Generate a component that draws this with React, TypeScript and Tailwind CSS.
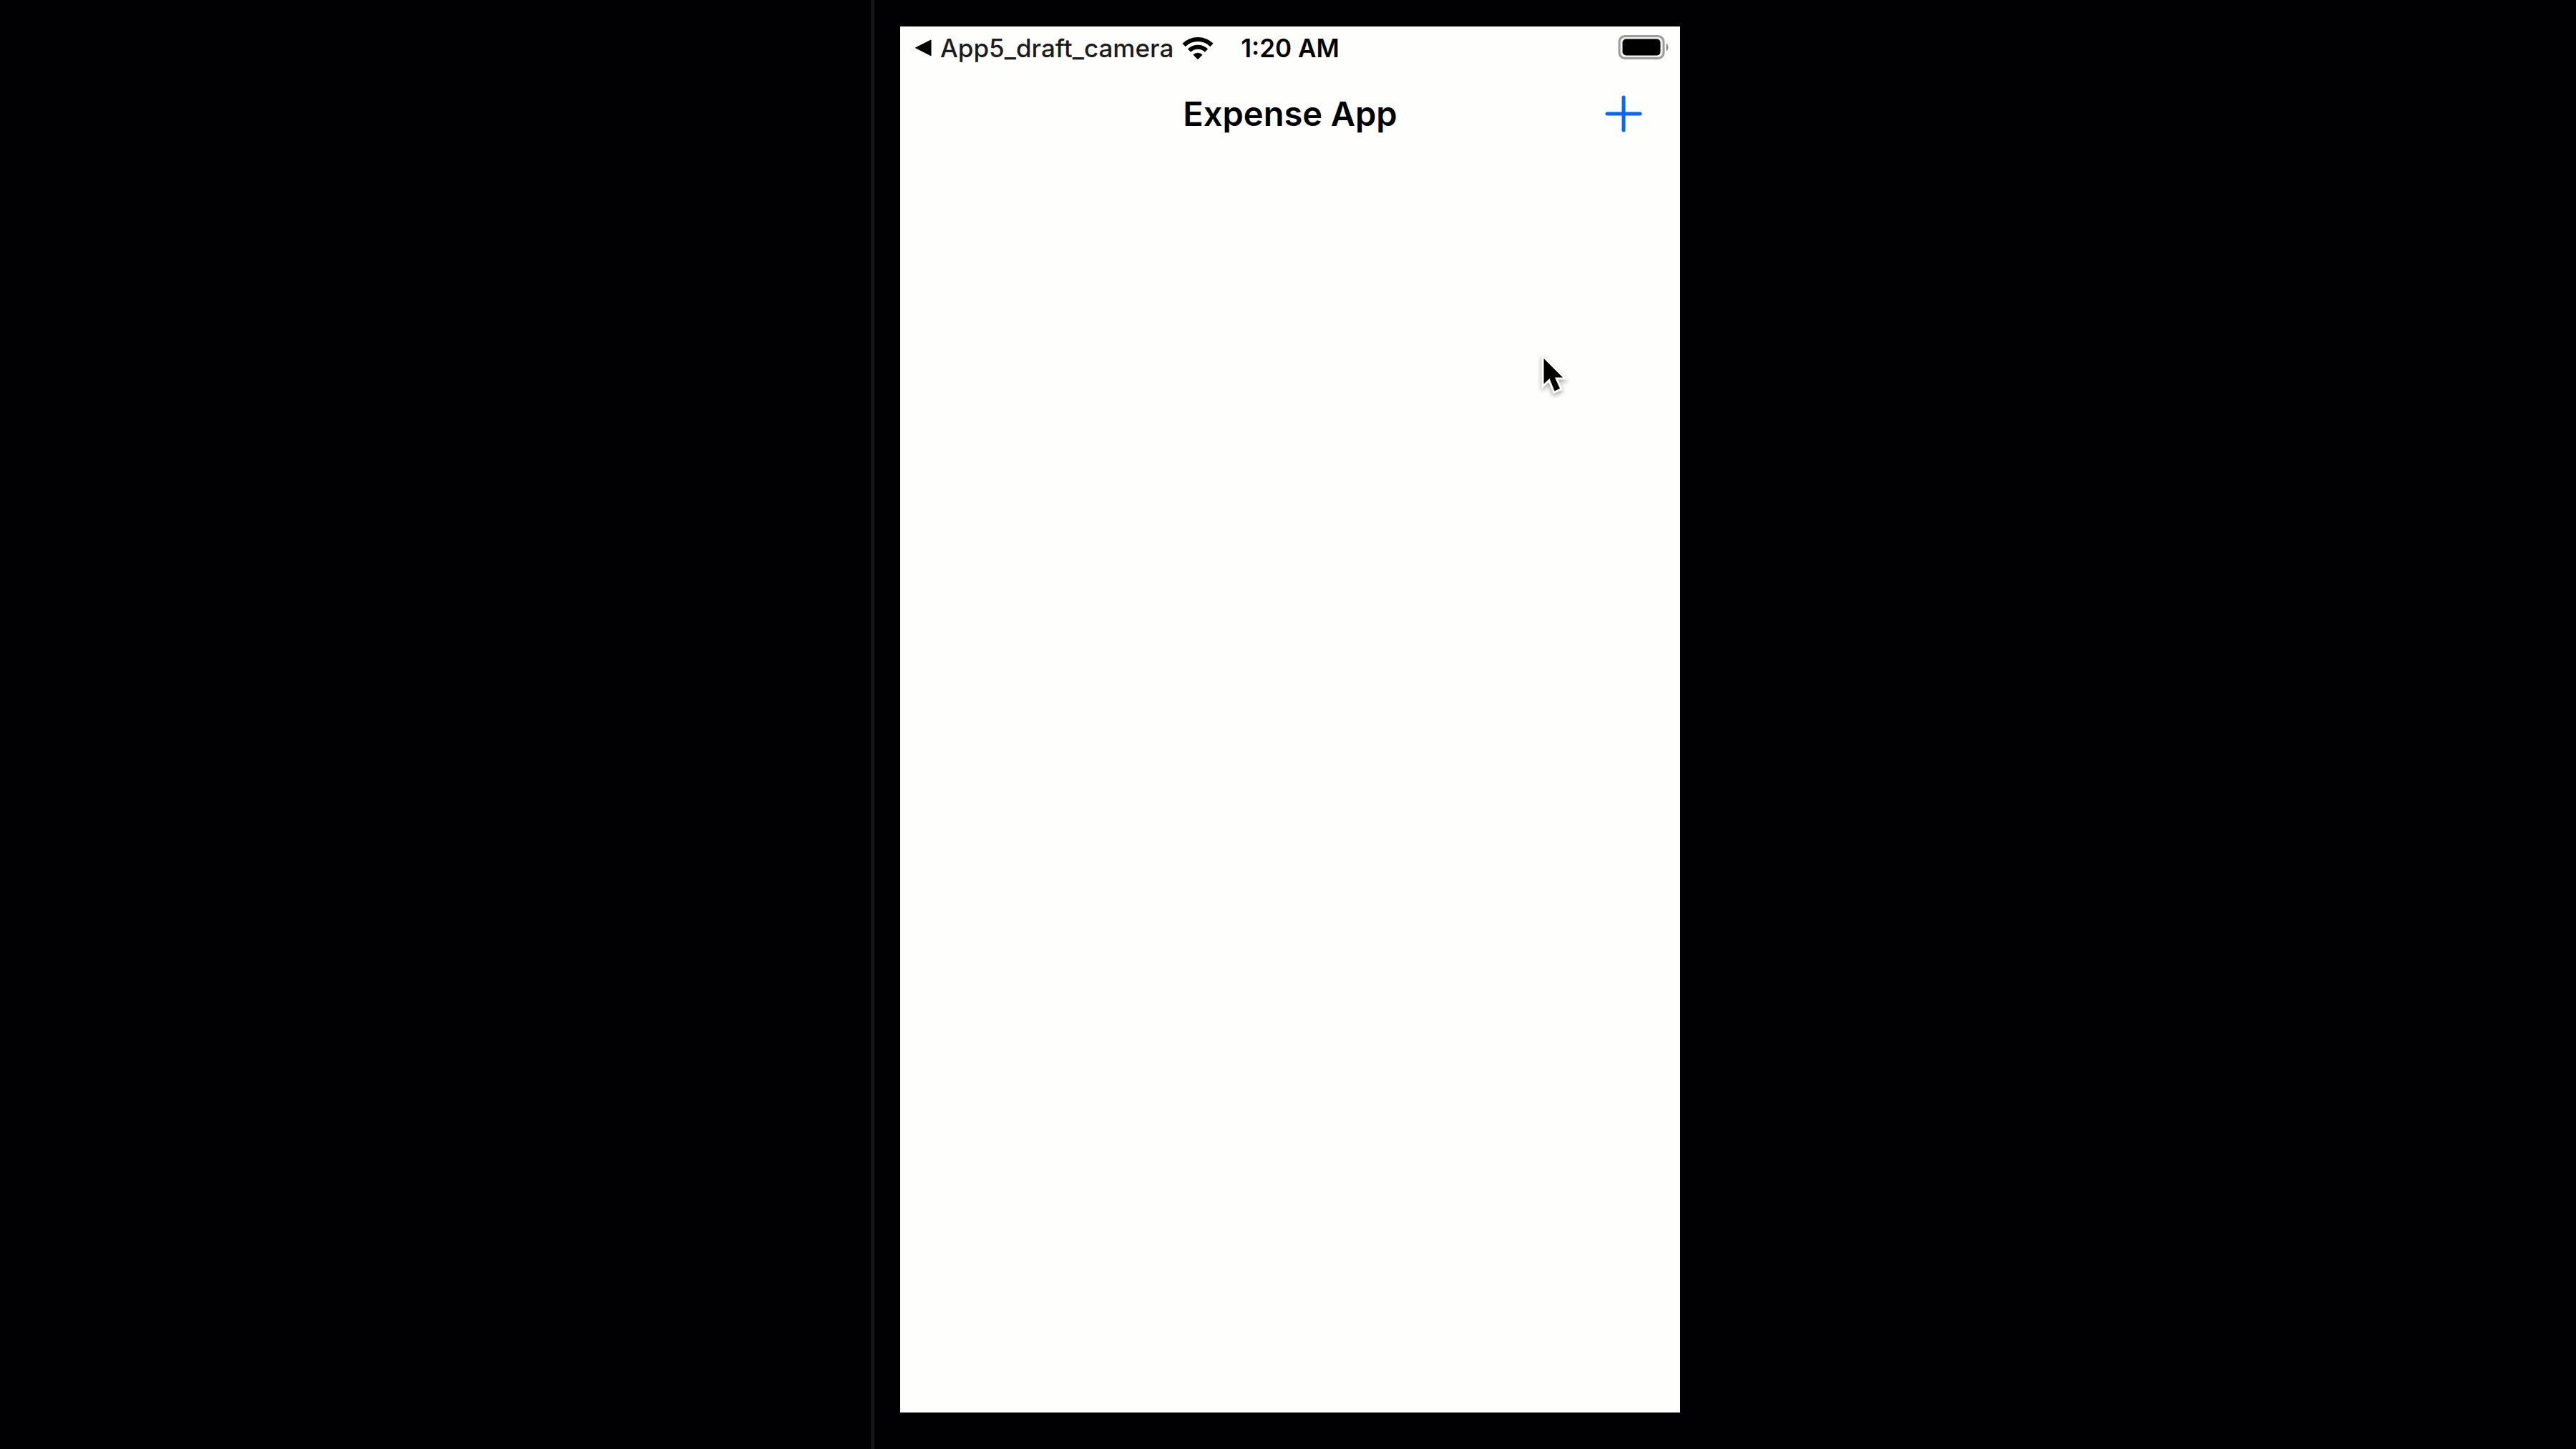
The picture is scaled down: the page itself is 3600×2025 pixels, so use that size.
function BackArrow() {
  return (
    <svg viewBox="0 0 24 24" className="size-6 shrink-0" aria-hidden="true">
      <path d="M1.5 11.8 L23 1 V22.8 Z" fill="#000" stroke="#000" strokeWidth="1" strokeLinejoin="round" />
    </svg>
  );
}

function WifiIcon() {
  return (
    <svg viewBox="0 0 44 32" className="h-8 w-11 shrink-0" role="img" aria-label="Wi-Fi">
      <g fill="none" stroke="#000" strokeWidth="6">
        <path d="M2.6 12 A27.5 27.5 0 0 1 41.4 12" />
        <path d="M10 19.6 A17 17 0 0 1 34 19.6" />
      </g>
      <path d="M15.4 25.4 A9.4 9.4 0 0 1 28.6 25.4 L22.8 31.4 Q22 32 21.2 31.4 Z" fill="#000" />
    </svg>
  );
}

function BatteryIcon() {
  return (
    <svg viewBox="0 0 71 36" className="h-9 w-[71px] shrink-0" role="img" aria-label="Battery full">
      <rect x="2" y="1.5" width="62" height="31" rx="8" fill="#f0f0f0" stroke="#9b9b9b" strokeWidth="3" />
      <rect x="6.5" y="5.5" width="53" height="23" rx="5" fill="#000" />
      <path d="M67.5 11.5 Q70.5 13 70.5 17 Q70.5 21 67.5 22.5 Z" fill="#8c8c8c" />
    </svg>
  );
}

function PlusIcon() {
  return (
    <svg viewBox="0 0 52 52" className="size-[52px]" aria-hidden="true">
      <path d="M26 3 V49 M3 26 H49" stroke="#0566fd" strokeWidth="5" strokeLinecap="round" />
    </svg>
  );
}

function Pointer() {
  return (
    <svg
      viewBox="0 0 44 60"
      className="pointer-events-none absolute top-[456px] left-[892px] h-[60px] w-11 drop-shadow-[0_3px_3px_rgba(0,0,0,0.35)]"
      aria-hidden="true"
    >
      <path
        d="M7.5 8 V43.5 L15.5 36 L22.5 53.5 L30 50 L23 34.5 H34 Z"
        fill="#000"
        stroke="#fff"
        strokeWidth="6"
        paintOrder="stroke"
      />
    </svg>
  );
}

function StatusBar() {
  return (
    <div className="grid h-15 grid-cols-[1fr_auto_1fr] items-center text-[35px] leading-none">
      <div className="flex items-center gap-3 pl-5">
        <button type="button" className="flex items-center gap-3 font-medium text-[#1c1c1c]">
          <BackArrow />
          <span>App5_draft_camera</span>
        </button>
        <WifiIcon />
      </div>
      <time className="font-semibold">1:20 AM</time>
      <div className="flex justify-end pr-4">
        <BatteryIcon />
      </div>
    </div>
  );
}

function NavigationBar() {
  return (
    <header className="grid h-31 grid-cols-[1fr_auto_1fr] items-center">
      <h1 className="col-start-2 text-[47px] leading-12 font-semibold">Expense App</h1>
      <button type="button" aria-label="Add expense" className="mr-[53px] justify-self-end">
        <PlusIcon />
      </button>
    </header>
  );
}

export default function App() {
  return (
    <div className="grid h-screen grid-cols-[611fr_1189fr] bg-[#010103] font-[Inter,sans-serif] text-black">
      <div className="border-r-5 border-[#161616]" />
      <div className="flex pt-[37px] pb-[51px] pl-9">
        <main className="relative w-full max-w-[1090px] bg-[#fefefd]">
          <StatusBar />
          <NavigationBar />
          <Pointer />
        </main>
      </div>
    </div>
  );
}
